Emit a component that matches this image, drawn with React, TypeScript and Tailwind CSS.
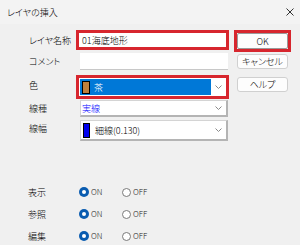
const Chevron = () => (
  <svg width="7" height="4" viewBox="0 0 7 4" className="block">
    <path d="M0.5 0.5 L3.5 3.5 L6.5 0.5" fill="none" stroke="#8a8a8a" strokeWidth="1" />
  </svg>
);

const Combo = (props: any) => (
  <div className="ml-[4px] w-[148px] h-full flex bg-white border border-[#d4d4d4] border-r-[2px] border-b-[2px] border-r-[#b4b4b4] border-b-[#b4b4b4]">
    <div className="flex-1 flex items-center pl-[1px]">{props.children}</div>
    <div className="w-[16px] flex items-center justify-center">
      <Chevron />
    </div>
  </div>
);

const RadioRow = ({ label }: { label: string }) => (
  <div className="flex items-center h-[22px]">
    <div className="w-[51px]">{label}</div>
    <div className="w-[43px] flex items-center">
      <span className="w-[10px] h-[10px] rounded-full bg-[#0a5cb0] flex items-center justify-center">
        <span className="w-[4px] h-[4px] rounded-full bg-white" />
      </span>
      <span className="ml-[2px] text-[8px] text-[#222]">ON</span>
    </div>
    <div className="flex items-center">
      <span className="w-[9px] h-[9px] rounded-full border border-[#7a7a7a] bg-white" />
      <span className="ml-[2px] text-[8px] text-[#222]">OFF</span>
    </div>
  </div>
);

export default function App() {
  return (
    <div className="w-[300px] h-[245px] overflow-hidden bg-[#f0f0f0] text-[9px] text-black font-light font-['Noto_Sans_CJK_JP',sans-serif] [font-feature-settings:'palt'] leading-none">
      <div className="h-[24px] bg-[#f3f3f3] flex items-center justify-between pl-[7px] pr-[6px]">
        <span className="text-[9px]">レイヤの挿入</span>
        <svg width="8" height="8" viewBox="0 0 8 8">
          <path d="M0.5 0.5 L7.5 7.5 M7.5 0.5 L0.5 7.5" stroke="#333" strokeWidth="1" />
        </svg>
      </div>
      <div className="flex">
        <div className="w-[234px] pl-[29px] pt-[6px]">
          <div className="flex items-center h-[20px]">
            <div className="w-[47px]">レイヤ名称</div>
            <div className="w-[153px] h-full border-[3px] border-[#d7262e] bg-white flex items-center pl-[3px]">
              01海底地形
            </div>
          </div>
          <div className="flex items-center h-[17px] mt-[3px]">
            <div className="w-[47px]">コメント</div>
            <div className="ml-[4px] w-[148px] h-full bg-white border-b border-[#c8c8c8]" />
          </div>
          <div className="flex items-center h-[24px] mt-[5px]">
            <div className="w-[47px] -mt-[4px]">色</div>
            <div className="w-[153px] h-full border-[3px] border-[#d7262e] bg-white flex p-[1px]">
              <div className="flex-1 bg-[#0078d7] flex items-center pl-[2px] text-white">
                <span className="w-[8px] h-[13px] bg-[#c0803c] border border-black mr-[4px]" />
                茶
              </div>
              <div className="w-[14px] flex items-center justify-center">
                <Chevron />
              </div>
            </div>
          </div>
          <div className="flex items-center h-[17px] mt-[1px]">
            <div className="w-[47px]">線種</div>
            <Combo>
              <span className="text-[#0000ff]">実線</span>
            </Combo>
          </div>
          <div className="flex items-center h-[21px] mt-[3px]">
            <div className="w-[47px] -mt-[4px]">線幅</div>
            <Combo>
              <span className="w-[7px] h-[15px] bg-[#0000ee] border border-black ml-[1px] mr-[5px]" />
              <span>細線(0.130)</span>
            </Combo>
          </div>
          <div className="mt-[40px] -ml-[1px]">
            <RadioRow label="表示" />
            <RadioRow label="参照" />
            <RadioRow label="編集" />
          </div>
        </div>
        <div className="pt-[6px] flex flex-col">
          <div className="w-[57px] h-[22px] border-[3px] border-[#d7262e]">
            <button className="w-full h-full bg-[#fdfdfd] border border-[#9a9a9a] rounded-[2px] flex items-center justify-center">
              OK
            </button>
          </div>
          <button className="mt-[2px] ml-[3px] w-[51px] h-[15px] bg-[#fdfdfd] border border-[#d0d0d0] rounded-[3px] flex items-center justify-center">
            キャンセル
          </button>
          <button className="mt-[8px] ml-[3px] w-[51px] h-[15px] bg-[#fdfdfd] border border-[#d0d0d0] rounded-[3px] flex items-center justify-center">
            ヘルプ
          </button>
        </div>
      </div>
    </div>
  );
}
